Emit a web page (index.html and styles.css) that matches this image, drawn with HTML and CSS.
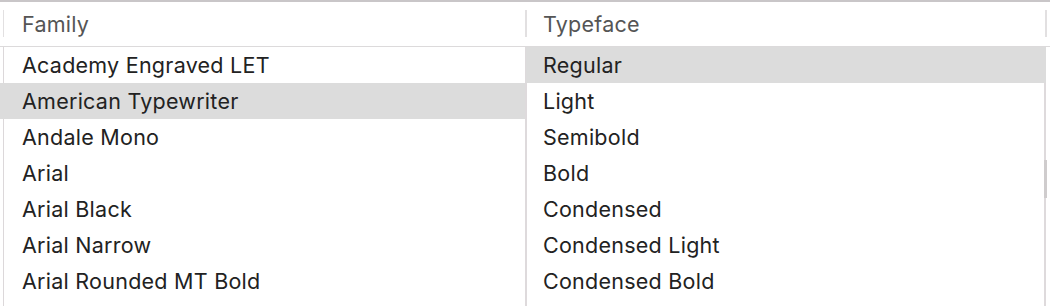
FILE: index.html
```html
<!DOCTYPE html>
<html>
<head>
<meta charset="utf-8">
<link rel="stylesheet" href="styles.css">
</head>
<body>
<div class="browser">
  <div class="header">
    <div class="hcell hcell-family"><span class="tick"></span><span class="htext">Family</span></div>
    <div class="hcell hcell-face"><span class="tick"></span><span class="htext">Typeface</span><span class="tick tick-end"></span></div>
  </div>
  <div class="body">
    <div class="col col-family">
      <div class="row">Academy Engraved LET</div>
      <div class="row selected">American Typewriter</div>
      <div class="row">Andale Mono</div>
      <div class="row">Arial</div>
      <div class="row">Arial Black</div>
      <div class="row">Arial Narrow</div>
      <div class="row">Arial Rounded MT Bold</div>
    </div>
    <div class="col col-face">
      <div class="row selected">Regular</div>
      <div class="row">Light</div>
      <div class="row">Semibold</div>
      <div class="row">Bold</div>
      <div class="row">Condensed</div>
      <div class="row">Condensed Light</div>
      <div class="row">Condensed Bold</div>
      <div class="thumb"></div>
    </div>
  </div>
</div>
</body>
</html>
```
FILE: styles.css
```css
html, body {
  margin: 0;
  padding: 0;
  background: #ffffff;
  overflow: hidden;
}
.browser {
  width: 1050px;
  height: 306px;
  border-top: 2px solid #c9c6c8;
  box-sizing: border-box;
  font-family: "Inter", "Noto Sans", sans-serif;
  font-size: 21.5px;
  letter-spacing: 0.25px;
  color: #222222;
  overflow: hidden;
}
.header {
  display: flex;
  height: 44px;
  border-bottom: 1px solid #dcdadb;
}
.hcell {
  display: flex;
  align-items: center;
  position: relative;
}
.hcell-family {
  width: 525px;
}
.hcell-face {
  width: 523px;
}
.tick {
  width: 1px;
  height: 27px;
  background: #e2e0e1;
  align-self: flex-start;
  margin-top: 8px;
}
.hcell-family .tick {
  margin-left: 3px;
}
.hcell-face .tick {
  width: 2px;
}
.htext {
  color: #555555;
  padding-left: 18px;
  flex: 1;
}
.hcell-face .htext {
  padding-left: 16px;
}
.tick-end {
  margin-left: auto;
}
.hcell-face .tick-end {
  width: 2px;
  margin-right: 1px;
}
.body {
  display: flex;
  height: 259px;
}
.col {
  display: flex;
  flex-direction: column;
  position: relative;
}
.col-family {
  width: 525px;
  background: linear-gradient(to right, transparent 3px, #dcd8da 3px, #dcd8da 4px, transparent 4px);
}
.col-face {
  width: 523px;
  background: linear-gradient(to right, #dedadc 0, #dedadc 2px, transparent 2px, transparent 519px, #dedadc 519px, #dedadc 521px, transparent 521px);
}
.row {
  height: 36px;
  line-height: 36px;
  padding-left: 22px;
  flex-shrink: 0;
  white-space: nowrap;
}
.col-face .row {
  padding-left: 18px;
}
.row.selected {
  background: #dcdcdc;
}
.col-face .row.selected {
  margin-left: 1px;
  margin-right: 2px;
  padding-left: 17px;
}
.thumb {
  position: absolute;
  left: 519px;
  top: 113px;
  width: 3px;
  height: 38px;
  background: #cfcccd;
}
```
